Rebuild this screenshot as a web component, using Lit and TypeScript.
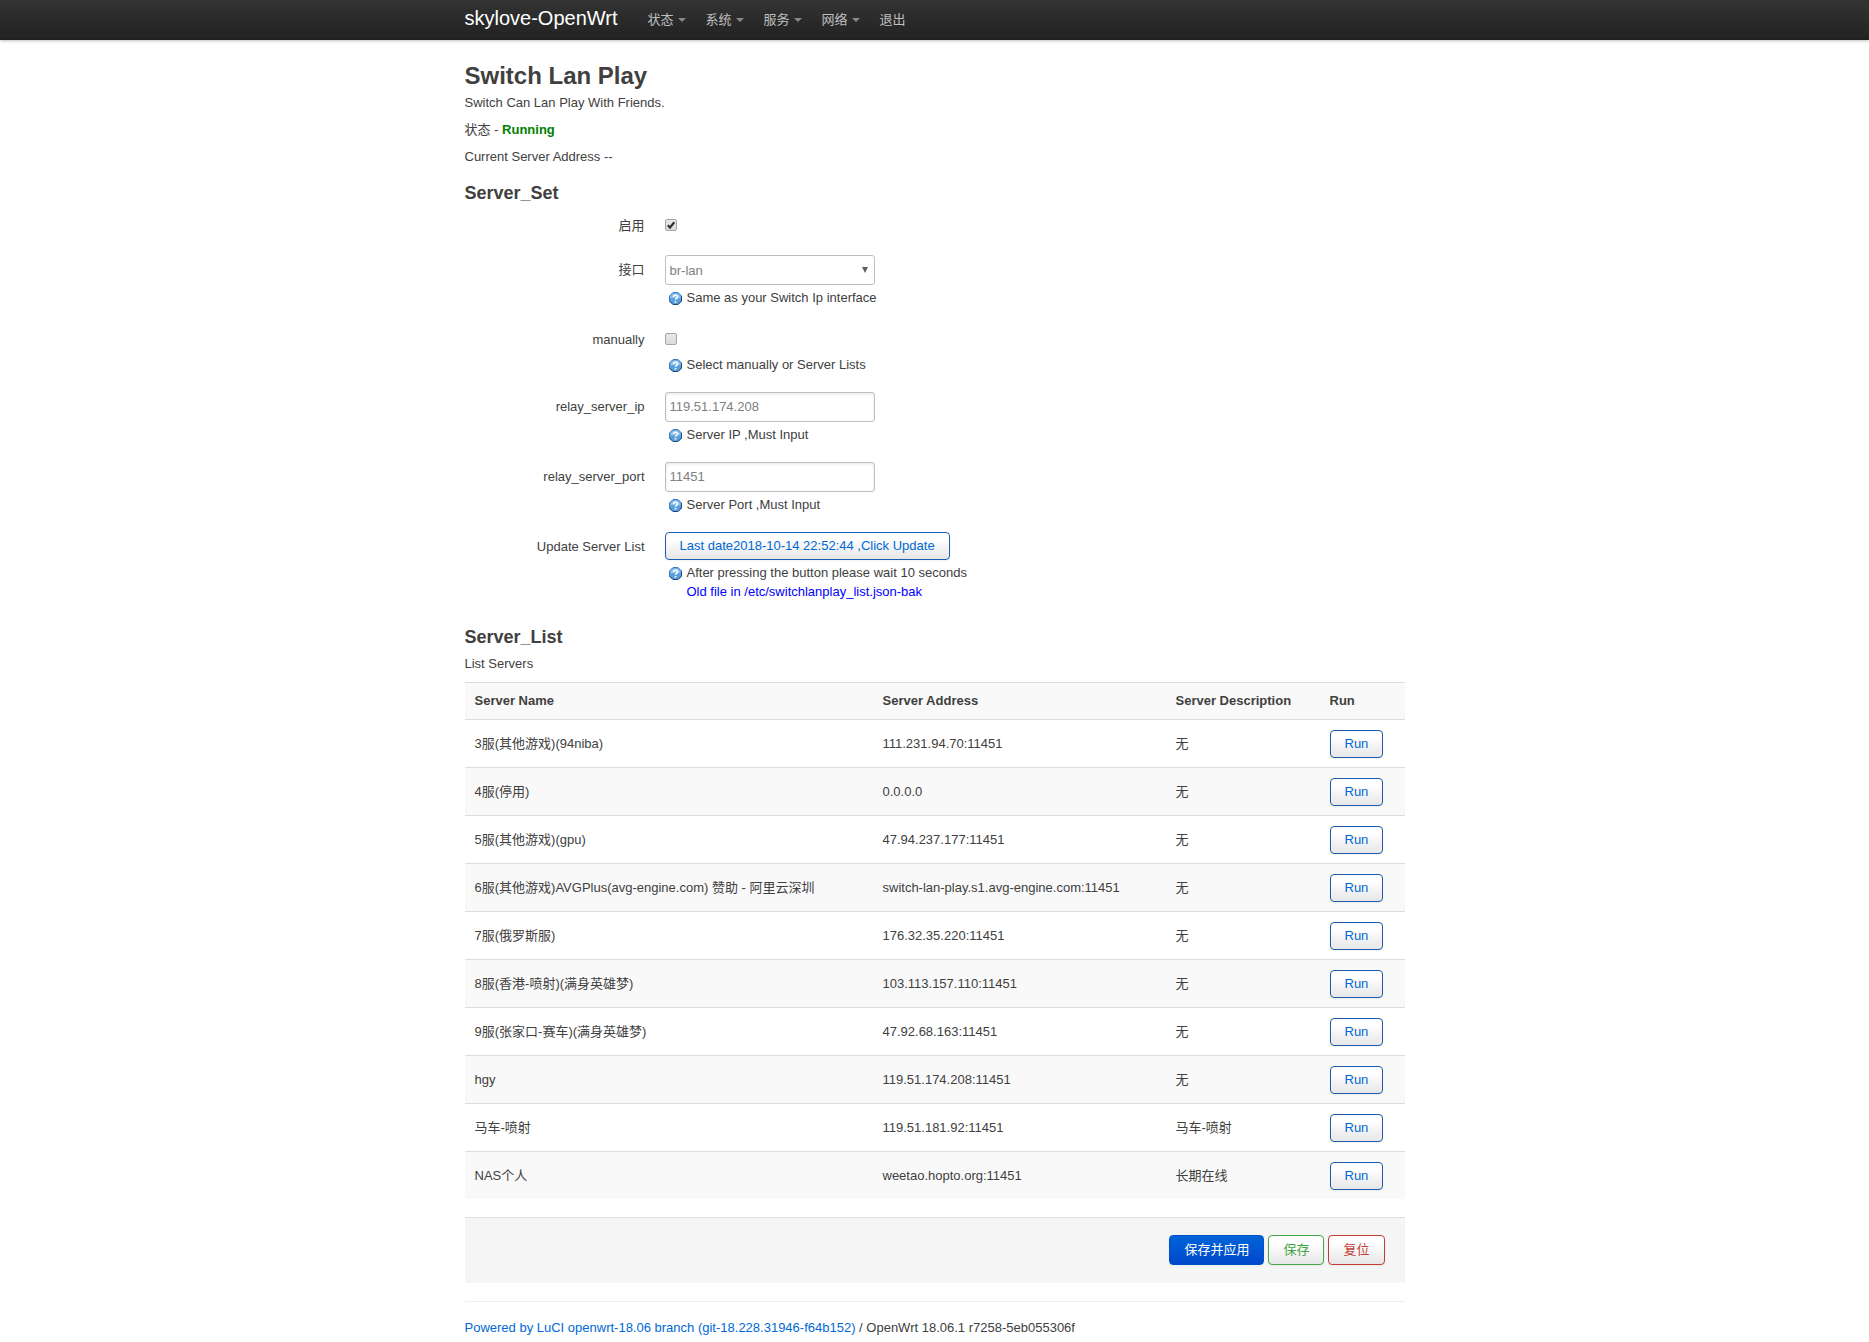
import { LitElement, html, css, svg, nothing, TemplateResult } from "lit";
import { customElement } from "lit/decorators.js";

interface Server {
  name: string;
  address: string;
  description: string;
}

const MENUS = ["状态", "系统", "服务", "网络"];

const SERVERS: Server[] = [
  { name: "3服(其他游戏)(94niba)", address: "111.231.94.70:11451", description: "无" },
  { name: "4服(停用)", address: "0.0.0.0", description: "无" },
  { name: "5服(其他游戏)(gpu)", address: "47.94.237.177:11451", description: "无" },
  { name: "6服(其他游戏)AVGPlus(avg-engine.com) 赞助 - 阿里云深圳", address: "switch-lan-play.s1.avg-engine.com:11451", description: "无" },
  { name: "7服(俄罗斯服)", address: "176.32.35.220:11451", description: "无" },
  { name: "8服(香港-喷射)(满身英雄梦)", address: "103.113.157.110:11451", description: "无" },
  { name: "9服(张家口-赛车)(满身英雄梦)", address: "47.92.68.163:11451", description: "无" },
  { name: "hgy", address: "119.51.174.208:11451", description: "无" },
  { name: "马车-喷射", address: "119.51.181.92:11451", description: "马车-喷射" },
  { name: "NAS个人", address: "weetao.hopto.org:11451", description: "长期在线" },
];

const helpIcon = html`<svg class="help-icon" viewBox="0 0 13 13" aria-hidden="true">
  ${svg`
    <path d="M4 .5h5L12.500 4v5L9 12.500H4L.5 9V4z" fill="#5b9fdc" stroke="#3f7fbf"/>
    <path d="M12.500 4v5L9 12.500H4L.5 9" fill="none" stroke="#1d4a80"/>
    <path d="M4.200 1.500h4.600L11.500 4.200v2H1.500v-2z" fill="#8fc3ee"/>
    <path d="M4.500 5c0-2.400 4-2.400 4 0 0 1.400-2 1.400-2 2.800" fill="none" stroke="#fff" stroke-width="1.500"/>
    <rect x="5.700" y="9" width="1.600" height="1.500" fill="#fff"/>`}
</svg>`;

@customElement("app-root")
export class AppRoot extends LitElement {
  static styles = css`
    :host {
      display: block;
      min-height: 100vh;
      background: #fff;
      color: #404040;
      font: 13px/18px "Liberation Sans", "Noto Sans CJK SC", sans-serif;
    }
    *,
    *::before,
    *::after {
      box-sizing: border-box;
    }
    a {
      color: #0069d6;
      text-decoration: none;
    }
    p,
    h2,
    h3 {
      margin: 0;
    }
    .topbar {
      background: linear-gradient(#333, #222);
      box-shadow: 0 1px 3px rgba(0, 0, 0, 0.25), inset 0 -1px 0 rgba(0, 0, 0, 0.1);
    }
    .container {
      max-width: 940px;
      margin: 0 auto;
    }
    .bar {
      display: flex;
      height: 40px;
    }
    .brand {
      margin-right: 20px;
      color: #fff;
      font-size: 20px;
      line-height: 36px;
    }
    .menu {
      display: flex;
      margin: 0;
      padding: 0;
      list-style: none;
    }
    .menu-link {
      display: flex;
      align-items: center;
      gap: 4px;
      padding: 10px;
      line-height: 19px;
      color: #bfbfbf;
    }
    .caret {
      border: 4px solid transparent;
      border-top-color: #888;
      border-bottom: 0;
    }
    .main {
      padding-top: 18px;
    }
    .title {
      font-size: 24px;
      line-height: 36px;
    }
    .section-title {
      font-size: 18px;
      line-height: 36px;
    }
    .para {
      margin-bottom: 9px;
    }
    .running {
      color: green;
    }
    .form {
      display: flex;
      flex-direction: column;
      gap: 18px;
      margin-bottom: 18px;
    }
    .row {
      display: flex;
      gap: 20px;
    }
    .label {
      flex: 0 0 180px;
      text-align: right;
      line-height: 30px;
    }
    .field {
      flex: 1;
    }
    .row-check .label {
      height: 26px;
    }
    .check-line {
      display: flex;
      align-items: center;
      height: 26px;
      padding-top: 2px;
    }
    .check-line + .help {
      margin-top: 4px;
    }
    .check-box {
      display: grid;
    }
    .check-box > * {
      grid-area: 1 / 1;
    }
    .check {
      appearance: none;
      width: 12px;
      height: 12px;
      margin: 0;
      border: 1px solid #a6a6a6;
      border-radius: 2px;
      background: linear-gradient(#e8e8e8, #dcdcdc);
    }
    .tick {
      width: 12px;
      height: 12px;
      pointer-events: none;
    }
    .text,
    .select {
      display: block;
      appearance: none;
      width: 210px;
      height: 30px;
      margin: 0;
      padding: 0 4px;
      border: 1px solid #bfbfbf;
      border-radius: 3px;
      background: #fff;
      color: #808080;
      font: inherit;
      line-height: 18px;
    }
    .text {
      padding-bottom: 2px;
      box-shadow: inset 0 1px 3px rgba(0, 0, 0, 0.1);
    }
    .select {
      padding-top: 2px;
    }
    .select-box {
      display: grid;
      width: 210px;
      align-items: center;
      justify-items: end;
    }
    .select-box > * {
      grid-area: 1 / 1;
    }
    .arrow {
      width: 6px;
      height: 6px;
      margin-right: 7px;
      pointer-events: none;
    }
    .help {
      display: flex;
      gap: 5px;
      margin-top: 3px;
      padding-left: 4px;
      line-height: 19px;
    }
    .help-icon {
      flex: none;
      width: 13px;
      height: 13px;
      margin-top: 4px;
    }
    .old-file {
      color: #00f;
    }
    .btn {
      display: block;
      padding: 4px 14px;
      border: 1px solid #1a5cb0;
      border-radius: 4px;
      background: linear-gradient(#fff 25%, #e6e6e6);
      box-shadow: 0 1px 2px rgba(0, 0, 0, 0.05);
      color: #0069d6;
      font: inherit;
      cursor: pointer;
    }
    .table {
      width: 100%;
      border-collapse: separate;
      border-spacing: 0;
      table-layout: fixed;
    }
    .col-name {
      width: 408px;
    }
    .col-address {
      width: 293px;
    }
    .col-description {
      width: 154px;
    }
    .cell {
      padding: 10px 10px 9px;
      border-top: 1px solid #ddd;
      text-align: left;
      vertical-align: middle;
    }
    .table tr:nth-child(even) .cell,
    .head .cell {
      background: #f9f9f9;
    }
    .head .cell {
      padding-top: 9px;
    }
    .actions {
      display: flex;
      justify-content: flex-end;
      gap: 4px;
      margin-top: 18px;
      padding: 17px 20px 18px;
      border-top: 1px solid #ddd;
      background: #f5f5f5;
    }
    .actions .btn {
      padding: 5px 14px;
    }
    .actions .apply {
      border-color: #0050cc;
      background: linear-gradient(#0064d8, #0048cc);
      color: #fff;
    }
    .actions .save {
      border-color: #46a546;
      color: #46a546;
    }
    .actions .reset {
      border-color: #c43c35;
      color: #c43c35;
    }
    .footer {
      margin-top: 18px;
      padding: 17px 0 6px;
      border-top: 1px solid #eee;
    }
  `;

  private row(id: string, label: string, control: TemplateResult, help?: unknown, check = false) {
    return html`<div class="row ${check ? "row-check" : ""}">
      <label class="label" for=${id}>${label}</label>
      <div class="field">
        ${control}
        ${help ? html`<div class="help">${helpIcon}<span>${help}</span></div>` : nothing}
      </div>
    </div>`;
  }

  private checkbox(id: string, checked: boolean) {
    return html`<div class="check-line"><span class="check-box">
      <input class="check" id=${id} type="checkbox" .checked=${checked} />
      ${checked
        ? html`<svg class="tick" viewBox="0 0 12 12" aria-hidden="true"><path d="M2.800 6.200L5 8.500 9.300 3.200" fill="none" stroke="#333" stroke-width="2.200" /></svg>`
        : nothing}
    </span></div>`;
  }

  render() {
    return html`
      <header class="topbar">
        <div class="container bar">
          <a class="brand" href="#">skylove-OpenWrt</a>
          <nav>
            <ul class="menu">
              ${MENUS.map((m) => html`<li><a class="menu-link" href="#">${m}<span class="caret"></span></a></li>`)}
              <li><a class="menu-link" href="#">退出</a></li>
            </ul>
          </nav>
        </div>
      </header>
      <div class="container">
        <main class="main">
          <h2 class="title">Switch Lan Play</h2>
          <p class="para">Switch Can Lan Play With Friends.</p>
          <p class="para">状态 - <b class="running">Running</b></p>
          <p class="para">Current Server Address --</p>

          <h3 class="section-title">Server_Set</h3>
          <div class="form">
            ${this.row("enabled", "启用", this.checkbox("enabled", true), undefined, true)}
            ${this.row(
              "ifname",
              "接口",
              html`<div class="select-box">
                <select class="select" id="ifname"><option>br-lan</option></select>
                <svg class="arrow" viewBox="0 0 6 6" aria-hidden="true"><path d="M0 0h6L3 6z" fill="#606060" /></svg>
              </div>`,
              "Same as your Switch Ip interface",
            )}
            ${this.row("manually", "manually", this.checkbox("manually", false), "Select manually or Server Lists", true)}
            ${this.row(
              "ip",
              "relay_server_ip",
              html`<input class="text" id="ip" type="text" value="119.51.174.208" />`,
              "Server IP ,Must Input",
            )}
            ${this.row(
              "port",
              "relay_server_port",
              html`<input class="text" id="port" type="text" value="11451" />`,
              "Server Port ,Must Input",
            )}
            ${this.row(
              "update",
              "Update Server List",
              html`<button class="btn" id="update" type="button">Last date2018-10-14 22:52:44 ,Click Update</button>`,
              html`After pressing the button please wait 10 seconds<br /><span class="old-file">Old file in /etc/switchlanplay_list.json-bak</span>`,
            )}
          </div>

          <h3 class="section-title">Server_List</h3>
          <p class="para">List Servers</p>
          <table class="table">
            <colgroup>
              <col class="col-name" />
              <col class="col-address" />
              <col class="col-description" />
              <col />
            </colgroup>
            <thead class="head">
              <tr>
                <th class="cell" scope="col">Server Name</th>
                <th class="cell" scope="col">Server Address</th>
                <th class="cell" scope="col">Server Description</th>
                <th class="cell" scope="col">Run</th>
              </tr>
            </thead>
            <tbody>
              ${SERVERS.map(
                (s) => html`<tr>
                  <td class="cell">${s.name}</td>
                  <td class="cell">${s.address}</td>
                  <td class="cell">${s.description}</td>
                  <td class="cell"><button class="btn" type="button">Run</button></td>
                </tr>`,
              )}
            </tbody>
          </table>
          <div class="actions">
            <button class="btn apply" type="button">保存并应用</button>
            <button class="btn save" type="button">保存</button>
            <button class="btn reset" type="button">复位</button>
          </div>
        </main>
        <footer class="footer">
          <a href="#">Powered by LuCI openwrt-18.06 branch (git-18.228.31946-f64b152)</a> / OpenWrt 18.06.1 r7258-5eb055306f
        </footer>
      </div>
    `;
  }
}
